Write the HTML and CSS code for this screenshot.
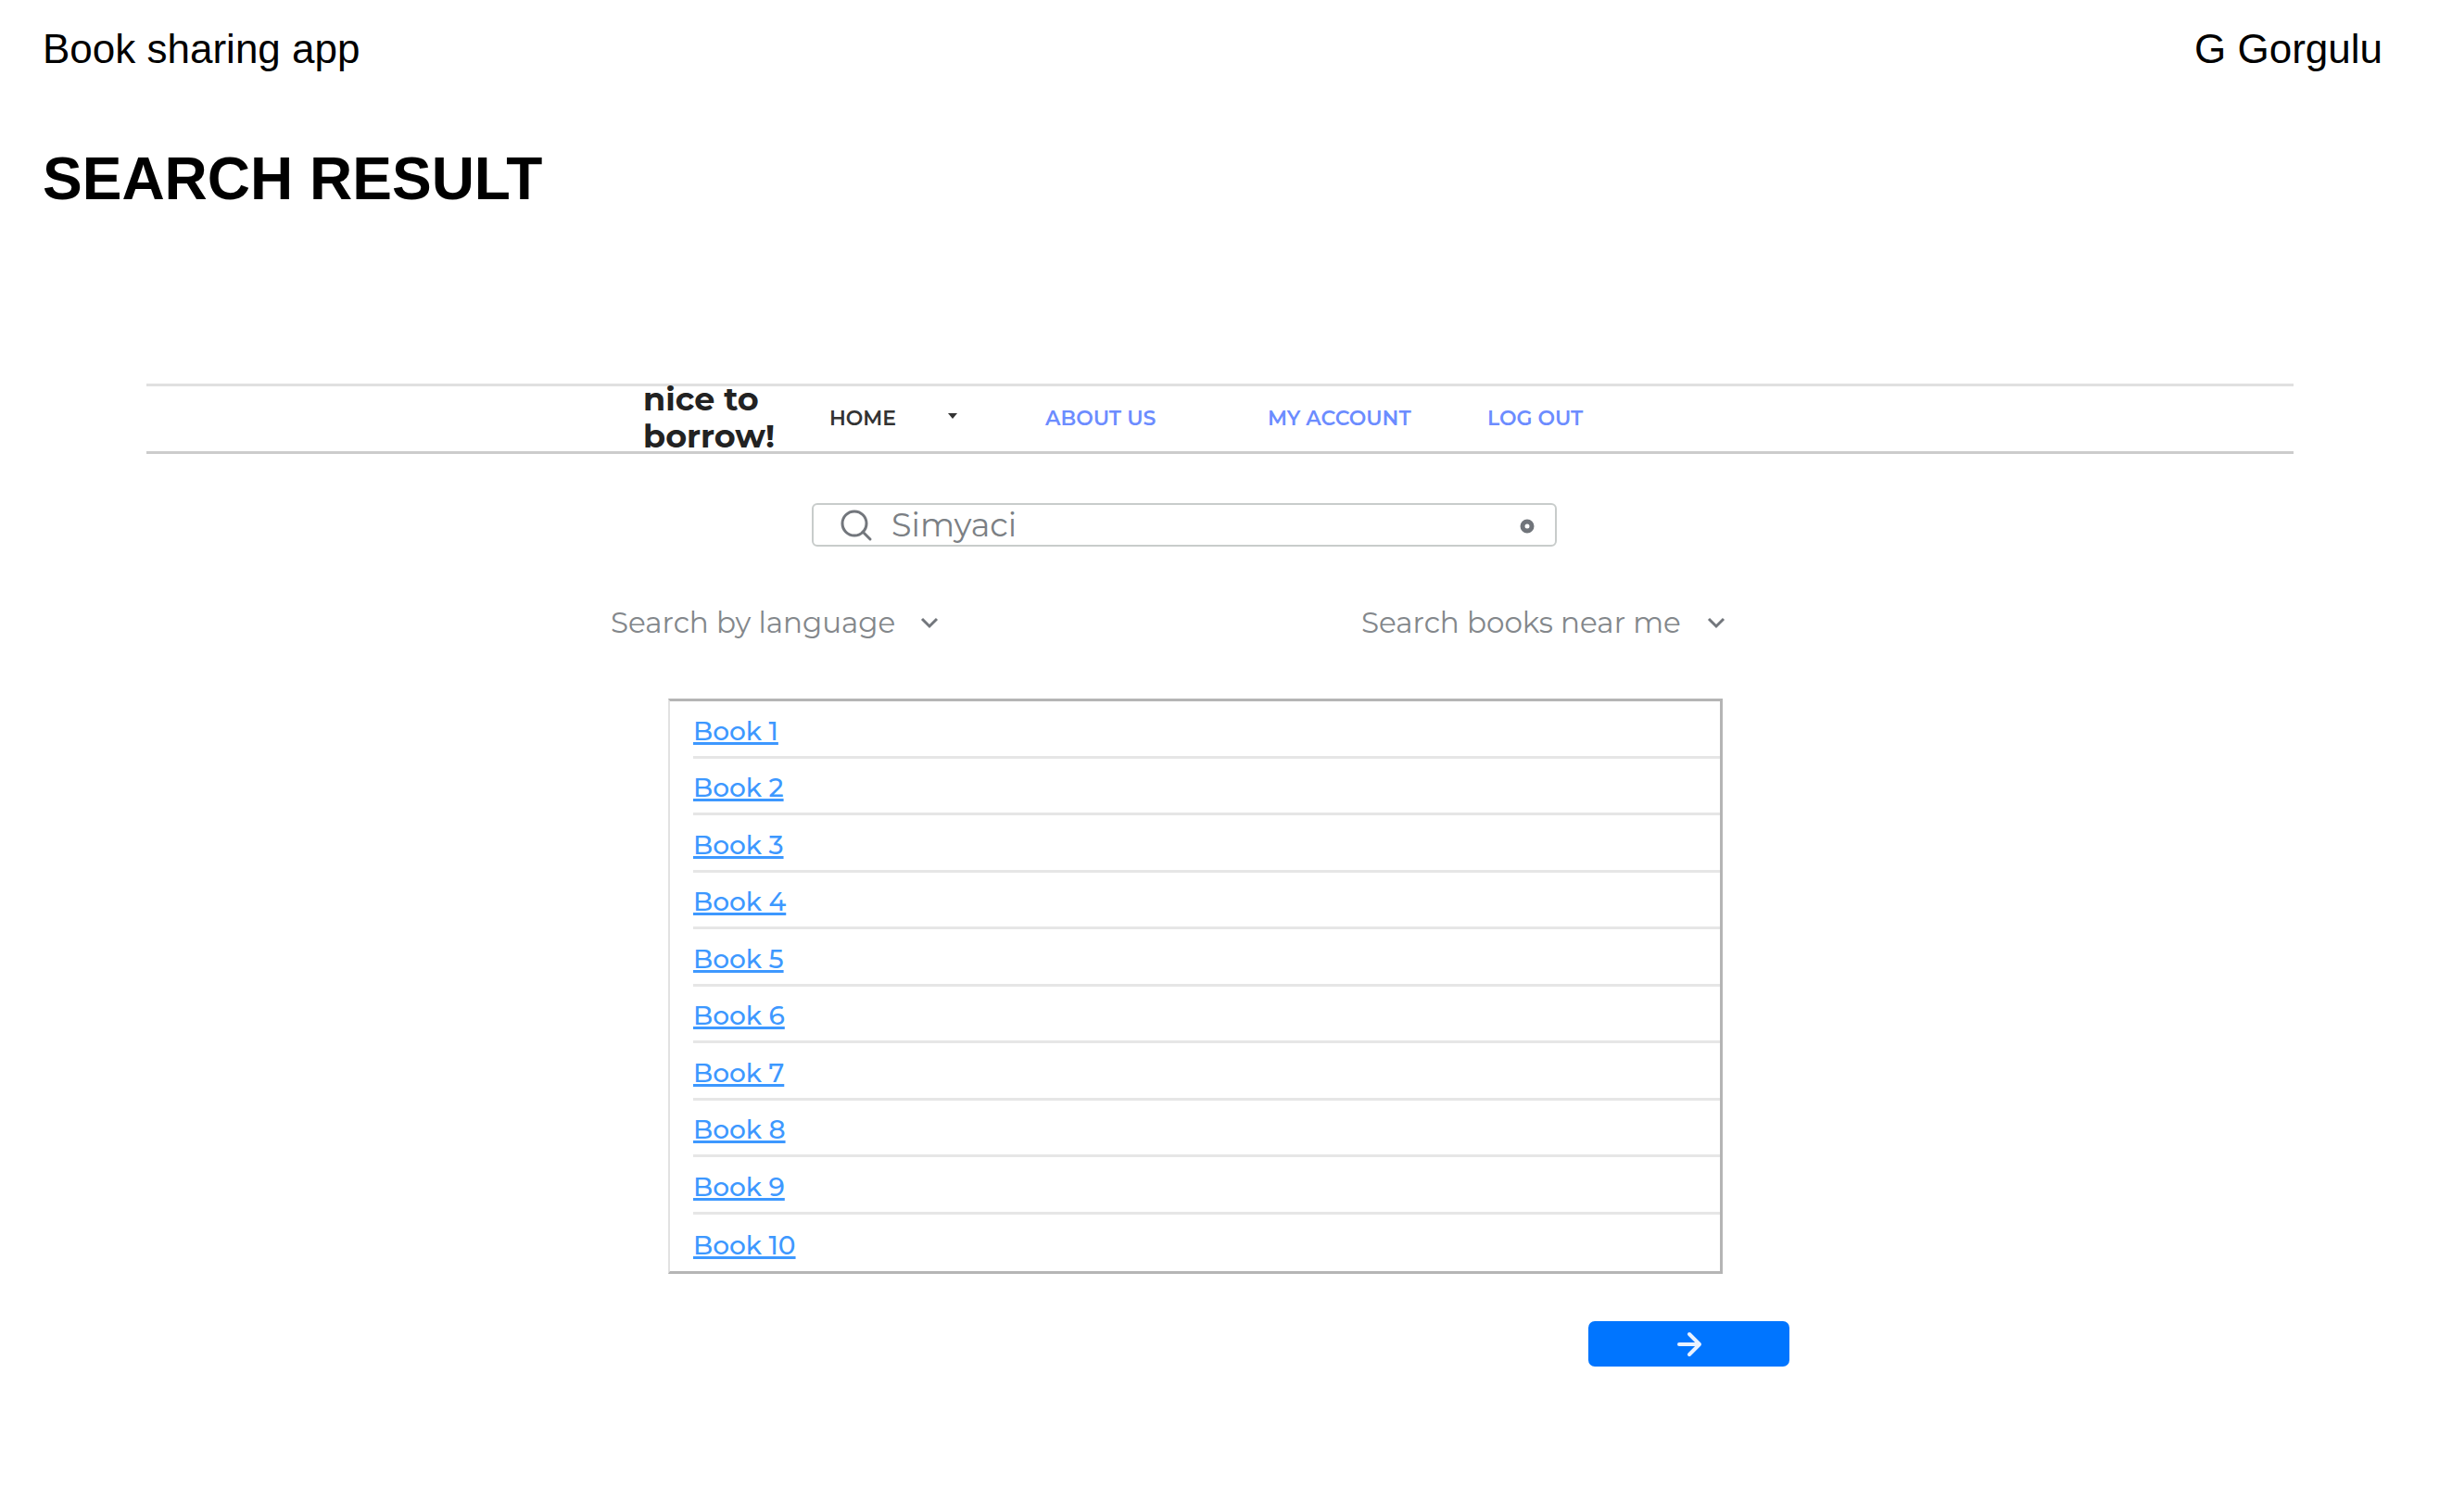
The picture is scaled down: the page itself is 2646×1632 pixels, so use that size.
FILE: index.html
```html
<!DOCTYPE html>
<html lang="en">
<head>
<meta charset="utf-8">
<meta name="viewport" content="width=device-width, initial-scale=1">
<title>Book sharing app</title>
<link rel="stylesheet" href="styles.css">
</head>
<body>
<header class="page-header">
  <span>Book sharing app</span>
  <span>G Gorgulu</span>
</header>
<h1 class="page-title">SEARCH RESULT</h1>
<main class="frame">
  <nav class="navbar" aria-label="Main">
    <div class="brand">nice to<br>borrow!</div>
    <div class="nav-home">
      <a class="nav-link nav-link-active" href="#">HOME</a>
      <button class="caret" type="button" aria-label="Open home menu">
        <svg width="10" height="6" viewBox="0 0 10 6" aria-hidden="true"><path d="M0 0h10L5 6z" fill="#333"/></svg>
      </button>
    </div>
    <a class="nav-link" href="#">ABOUT US</a>
    <a class="nav-link" href="#">MY ACCOUNT</a>
    <a class="nav-link" href="#">LOG OUT</a>
  </nav>

  <form class="search-row">
    <div class="search">
      <svg width="36" height="36" viewBox="0 0 36 36" fill="none" stroke="#72767c" stroke-width="3" stroke-linecap="round" aria-hidden="true"><circle cx="16" cy="16" r="13"/><path d="M25 25l8 8"/></svg>
      <input class="search-input" type="text" value="Simyaci" aria-label="Search books">
      <button class="clear" type="button" aria-label="Clear search">
        <svg width="16" height="16" viewBox="0 0 16 16" aria-hidden="true"><circle cx="8" cy="8" r="5" fill="none" stroke="#70747a" stroke-width="5"/></svg>
      </button>
    </div>
  </form>

  <div class="filter-row">
    <div class="filters">
      <div class="filter filter-language">
        <select class="filter-select" aria-label="Language"><option>Search by language</option></select>
        <svg class="chevron" width="20" height="14" viewBox="0 0 20 14" fill="none" stroke="#72767c" stroke-width="3" aria-hidden="true"><path d="M2 3l8 8 8-8"/></svg>
      </div>
      <div class="filter filter-nearby">
        <select class="filter-select" aria-label="Location"><option>Search books near me</option></select>
        <svg class="chevron" width="20" height="14" viewBox="0 0 20 14" fill="none" stroke="#72767c" stroke-width="3" aria-hidden="true"><path d="M2 3l8 8 8-8"/></svg>
      </div>
    </div>
  </div>

  <div class="results-row">
    <ul class="results">
      <li class="result"><a href="#">Book 1</a></li>
      <li class="result"><a href="#">Book 2</a></li>
      <li class="result"><a href="#">Book 3</a></li>
      <li class="result"><a href="#">Book 4</a></li>
      <li class="result"><a href="#">Book 5</a></li>
      <li class="result"><a href="#">Book 6</a></li>
      <li class="result"><a href="#">Book 7</a></li>
      <li class="result"><a href="#">Book 8</a></li>
      <li class="result"><a href="#">Book 9</a></li>
      <li class="result"><a href="#">Book 10</a></li>
    </ul>
  </div>

  <div class="next-row">
    <button class="next" type="button" aria-label="Next page">
      <svg width="28" height="28" viewBox="0 0 28 28" fill="none" stroke="#e9f2ff" stroke-width="4" stroke-linecap="round" stroke-linejoin="round" aria-hidden="true"><path d="M3 14h22M14 3l11 11-11 11"/></svg>
    </button>
  </div>
</main>
</body>
</html>
```
FILE: styles.css
```css
* {
  box-sizing: border-box;
}

body {
  margin: 0;
  background: #fff;
  color: #000;
  font-family: Montserrat, Inter, sans-serif;
}

button,
input,
select {
  margin: 0;
  padding: 0;
  border: 0;
  background: none;
  color: inherit;
  font: inherit;
  appearance: none;
}

svg {
  display: block;
  flex: none;
}

.page-header {
  display: flex;
  justify-content: space-between;
  padding: 27px 75px 0 46px;
  font: 44px/52px "Liberation Sans", Arial, sans-serif;
}

.page-title {
  margin: 77px 46px 0;
  font: bold 64px/74px "Liberation Sans", Arial, sans-serif;
}

.frame {
  margin: 184px 171px 0 158px;
}

/* Navigation bar */
.navbar {
  display: grid;
  grid-template-rows: 70px;
  grid-template-columns: 536fr 201px 233px 240px 237px 870fr;
  align-items: center;
  border-top: 3px solid #e0e0e0;
  border-bottom: 3px solid #ccc;
}

.brand {
  grid-column: 2;
  padding-bottom: 2px;
  color: #222;
  font-size: 35px;
  font-weight: 700;
  line-height: 40px;
}

.nav-home {
  display: flex;
  align-items: center;
}

.nav-link {
  color: #6c8cff;
  font-size: 22px;
  font-weight: 600;
  line-height: 28px;
  text-decoration: none;
}

.nav-link-active {
  width: 128px;
  color: #333;
}

.caret {
  padding: 2px 0 8px;
}

/* Search box */
.search-row {
  display: grid;
  grid-template-columns: 718fr 804px 795fr;
  margin-top: 53px;
}

.search {
  grid-column: 2;
  display: flex;
  align-items: center;
  height: 47px;
  padding: 0 22px 0 28px;
  border: 2px solid #c8cccb;
  border-radius: 6px;
}

.search-input {
  flex: 1;
  min-width: 0;
  height: 43px;
  padding-left: 20px;
  color: #7b7f84;
  font-size: 35px;
}

.clear {
  padding-top: 3px;
}

/* Filters */
.filter-row {
  display: grid;
  grid-template-columns: 501fr 1203px 613fr;
  margin-top: 57px;
}

.filters {
  grid-column: 2;
  display: flex;
  justify-content: space-between;
}

.filter {
  display: grid;
  align-items: center;
}

.filter-language {
  width: 354px;
}

.filter-nearby {
  width: 393px;
}

.filter-select,
.chevron {
  grid-area: 1 / 1;
}

.filter-select {
  width: 100%;
  height: 50px;
  color: #83878b;
  font-size: 31px;
}

.chevron {
  justify-self: end;
  pointer-events: none;
}

/* Result list */
.results-row {
  display: grid;
  grid-template-columns: 563fr 1138px 616fr;
  margin-top: 57px;
}

.results {
  grid-column: 2;
  margin: 0;
  padding: 0 0 0 25px;
  border: 2px solid #b5b5b5;
  border-width: 3px 3px 3px 2px;
  border-left-color: #e2e2e2;
  list-style: none;
}

.result {
  display: flex;
  align-items: center;
  height: 62px;
  padding-top: 4px;
  border-bottom: 3px solid #e6e6e6;
}

.result:nth-child(even) {
  height: 61px;
}

.result:last-child {
  border-bottom: 0;
}

.result a {
  color: #3d98ff;
  font-size: 28px;
  font-weight: 500;
  line-height: 40px;
  text-decoration-thickness: 3px;
  text-underline-offset: 2px;
  text-decoration-skip-ink: none;
}

/* Pager */
.next-row {
  display: grid;
  grid-template-columns: 1556fr 217px 544fr;
  margin: 51px 0 0;
}

.next {
  grid-column: 2;
  display: flex;
  align-items: center;
  justify-content: center;
  height: 49px;
  border-radius: 7px;
  background: #0075ff;
}
```
